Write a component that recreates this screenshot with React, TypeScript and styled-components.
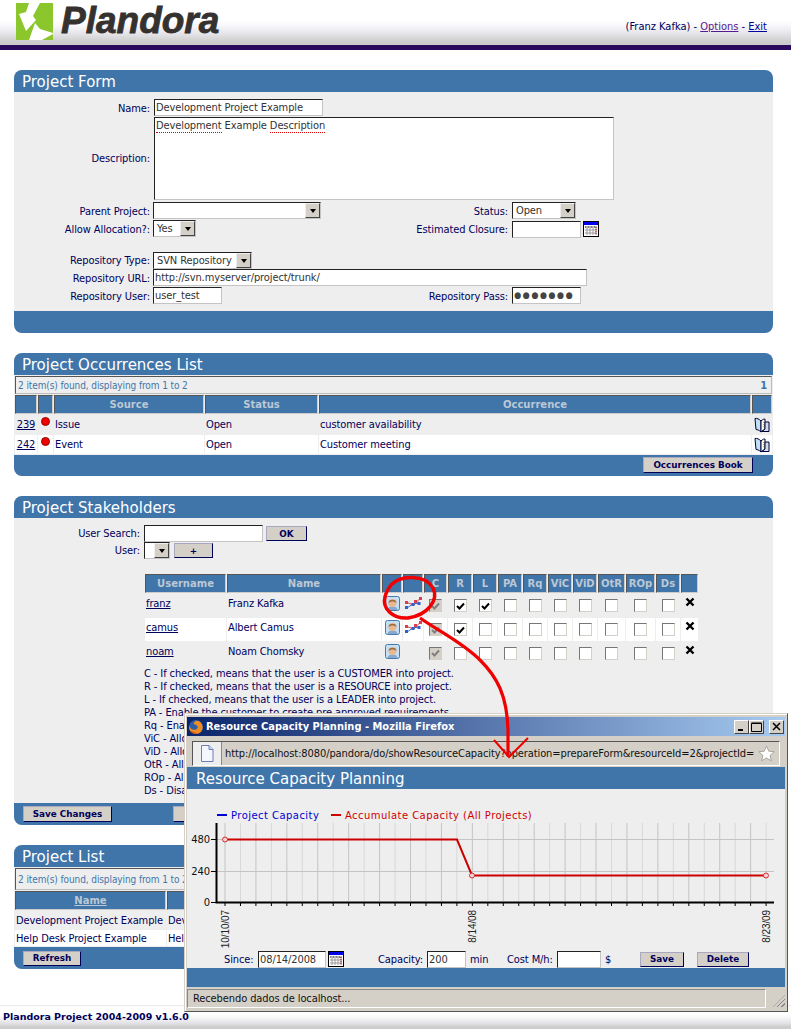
import React from 'react'
import styled, { createGlobalStyle } from 'styled-components'

const colors = {
    blue: '#4075aa',
    grey: '#eeeeee',
    navy: '#00005a',
    win: '#d4d0c8',
    red: '#e00000',
}

const GlobalStyle = createGlobalStyle`
    html, body {
        margin: 0;
        padding: 0;
        background: #fff;
    }
    body {
        font-family: "DejaVu Sans Condensed", "Liberation Sans", Arial, sans-serif;
        font-size: 11px;
        letter-spacing: -0.1px;
        color: ${colors.navy};
    }
`

/* ---------- small drawings ---------- */

const PlandoraMark = () => (
    <svg width="37" height="37" viewBox="0 0 37 37">
        <rect width="37" height="37" fill="#8bc62c" />
        <path d="M13 0H24L17 13L20 17L10 28L3 11L10 9Z" fill="#fff" />
        <path d="M13 37L19 20L24 26L37 30V31L26 37Z" fill="#fff" />
    </svg>
)

const CalendarIcon = () => (
    <svg width="16" height="16" viewBox="0 0 16 16">
        <rect x="0.5" y="0.5" width="15" height="15" fill="#fff" stroke="#000" />
        <rect x="1" y="1" width="14" height="3" fill="#0000f0" />
        <path d="M2 6H14M2 9H14M2 12H14M4 5V14M7 5V14M10 5V14M13 5V14" stroke="#999" />
        <path d="M2 6h10" stroke="#333" strokeDasharray="1 2" />
        <path d="M13 6v8" stroke="#d00" strokeDasharray="1 1" />
    </svg>
)

const BookIcon = () => (
    <svg width="16" height="16" viewBox="0 0 16 16">
        <path d="M1 1.5C3 1 5 2 7 4V15C5 13 3 12.5 2 12.5Z" fill="#bfe0f5" stroke="#00003a" />
        <path d="M7 4C9 2 10 2 11 2V12L7 15Z" fill="#fffbe0" stroke="#00003a" />
        <path d="M11 5H15V14.5H8L11 12Z" fill="#d0dce8" stroke="#00003a" />
        <path d="M9.5 5v5" stroke="#e0c020" strokeDasharray="1 1" />
    </svg>
)

const UserIcon = () => (
    <svg width="15" height="15" viewBox="0 0 15 15">
        <rect x="0.5" y="0.5" width="14" height="14" rx="2" fill="#c4e0f6" stroke="#4a78a8" />
        <path d="M2.5 14C2.5 11.5 5 10.5 7.5 10.5S12.5 11.5 12.5 14Z" fill="#86aace" />
        <circle cx="7.5" cy="7" r="4" fill="#eab890" />
        <path d="M3.5 7C3 2.5 12 2.5 11.5 7C9.5 5 6 5 3.5 7Z" fill="#9a6a3c" />
    </svg>
)

const CapacityIcon = () => (
    <svg width="17" height="13" viewBox="0 0 17 13" fill="none">
        <path d="M2 5.5L9 8L15 1.5" stroke="#d0404a" />
        <path d="M2 11L8 7L14 6" stroke="#3a68c8" />
        <g fill="#d84050">
            <rect x="0" y="4" width="3" height="3" />
            <rect x="9" y="3" width="3" height="3" />
            <rect x="14" y="0" width="3" height="3" />
        </g>
        <g fill="#3060d0">
            <rect x="0" y="9" width="3" height="3" />
            <rect x="6.5" y="6" width="3" height="3" />
            <rect x="12.5" y="5" width="3" height="3" />
        </g>
    </svg>
)

const RemoveIcon = () => (
    <svg width="10" height="10" viewBox="0 0 10 10">
        <path d="M1.5 1.5L8.5 8.5M8.5 1.5L1.5 8.5" stroke="#000" strokeWidth="2.4" />
    </svg>
)

const FirefoxIcon = () => (
    <svg width="16" height="16" viewBox="0 0 17 17">
        <circle cx="8.5" cy="8.5" r="7.5" fill="#2d5fa8" />
        <path d="M8 2C12 1 16 5 15.5 9.5C15 14 11 16.5 7 15.8C3 15 .5 11.5 1.2 7C2 9.5 3.5 11.5 6.5 11.5C9.5 11.5 11 9.5 10 7.5C9 6 7 6 6 5C6 4 7 3 8 2Z" fill="#ef8b1f" />
        <path d="M2 12C4 15 8 16.4 11 15.3C8 15 5 14 2 12Z" fill="#c8401a" />
    </svg>
)

const PageIcon = () => (
    <svg width="14" height="17" viewBox="0 0 14 17">
        <path d="M1.5 .5H9L13 4.5V16.5H1.5Z" fill="#f4f7ff" stroke="#6d7db5" />
        <path d="M9 .5V4.5H13" fill="#cfd8f0" stroke="#6d7db5" />
    </svg>
)

const StarIcon = () => (
    <svg width="17" height="17" viewBox="0 0 17 17">
        <path d="M8.5 1L10.8 6.2L16.2 6.7L12.1 10.4L13.3 15.8L8.5 13L3.7 15.8L4.9 10.4L.8 6.7L6.2 6.2Z" fill="#fff" stroke="#a8a49c" />
    </svg>
)

const CapacityChart = () => {
    const ticks = Array.from({ length: 36 }, (_, i) => 39 + i * 15.46)
    return (
        <svg width="592" height="159" viewBox="5 4 592 159" fontFamily="DejaVu Sans, sans-serif">
            <g fontSize="10" letterSpacing="0.45">
                <rect x="31" y="29" width="10" height="2" fill="#0000d0" />
                <text x="45" y="34" fill="#0000d0">Project Capacity</text>
                <rect x="145" y="29" width="10" height="2" fill="#d00000" />
                <text x="159" y="34" fill="#d00000">Accumulate Capacity (All Projects)</text>
            </g>
            {ticks.map((x, i) => (
                <g key={`tick-${i}`}>
                    <line x1={x} x2={x} y1="38" y2="116" stroke={i % 2 ? '#d8d8d8' : '#c4c4c4'} />
                    <line x1={x} x2={x} y1="117" y2="121" stroke="#000" />
                </g>
            ))}
            <path d="M30 54.5H588M30 86.5H588" stroke="#c4c4c4" />
            <path d="M30.5 38V117.5H588" fill="none" stroke="#000" strokeWidth="2" />
            <path d="M25 54.5H30M25 86.5H30M25 117.5H30" stroke="#000" />
            <g fontSize="10" fill="#111" textAnchor="end">
                <text x="24" y="58">480</text>
                <text x="24" y="90">240</text>
                <text x="24" y="121">0</text>
            </g>
            <path d="M39 54.5H271L286 90.5H580" fill="none" stroke="#cc0000" strokeWidth="2" />
            <g fill="#fbd0d0" stroke="#cc3333">
                <circle cx="39" cy="54.5" r="2.5" />
                <circle cx="286" cy="90.5" r="2.5" />
                <circle cx="580" cy="90.5" r="2.5" />
            </g>
            <g fontSize="10" fontFamily="Liberation Sans, sans-serif" fill="#222" textAnchor="end">
                <text transform="translate(43 125) rotate(-90)">10/10/07</text>
                <text transform="translate(290 125) rotate(-90)">8/14/08</text>
                <text transform="translate(584 125) rotate(-90)">8/23/09</text>
            </g>
        </svg>
    )
}

/* ---------- page chrome ---------- */

const Page = styled.div`
    position: relative;
    width: 791px;
    height: 1029px;
    overflow: hidden;
`

const Header = styled.header`
    height: 50px;
    padding: 3px 24px 0 16px;
    box-sizing: border-box;
    display: flex;
    justify-content: space-between;
    background: linear-gradient(#fff 0, #fff 20px, #f8f6fa 26px, #e4e4e8 34px, #cccccc 42px, #cccccc 45px);
    border-bottom: 5px solid #2b0a5e;
`

const Logo = styled.div`
    display: flex;
    gap: 8px;
`

const LogoText = styled.span`
    font-family: "Liberation Sans", Arial, sans-serif;
    font-size: 37px;
    line-height: 35px;
    font-weight: 700;
    font-style: italic;
    letter-spacing: 0;
    color: #35312f;
    -webkit-text-stroke: 0.8px #35312f;
`

const UserBar = styled.div`
    align-self: flex-end;
    padding-bottom: 12px;
    letter-spacing: 0;
    a { color: #00009c; }
    a.visited { color: #551a8b; }
`

const Main = styled.main`
    padding: 20px 18px 0 14px;
    display: flex;
    flex-direction: column;
`

const Panel = styled.section<{ $gap: number }>`
    margin-bottom: ${p => p.$gap}px;
    background: ${colors.grey};
    border-radius: 8px;
    overflow: hidden;
`

const PanelTitle = styled.h2`
    margin: 0;
    height: 22px;
    padding-left: 8px;
    background: ${colors.blue};
    color: #fff;
    letter-spacing: 0;
    font: 400 15px/25px "DejaVu Sans", Verdana, sans-serif;
`

const PanelFooter = styled.div<{ $height?: number }>`
    height: ${p => p.$height || 22}px;
    box-sizing: border-box;
    background: ${colors.blue};
    display: flex;
    align-items: center;
    padding: 0 20px 0 9px;
    gap: 61px;
`

const FooterEnd = styled(PanelFooter)`
    justify-content: flex-end;
    padding-bottom: 2px;
`

/* ---------- form controls ---------- */

const Label = styled.label`
    text-align: right;
    white-space: nowrap;
    align-self: center;
`

const TextBox = styled.div<{ $width: number; $height?: number }>`
    width: ${p => p.$width}px;
    height: ${p => p.$height || 17}px;
    box-sizing: border-box;
    flex: none;
    padding: 1px;
    background: #fff;
    border: 1px solid #c4c4c4;
    border-top-color: #222;
    border-left-color: #222;
    color: #333;
    line-height: 13px;
    overflow: hidden;
    white-space: nowrap;
`

const Squiggle = styled.span`
    border-bottom: 1px dotted #e00000;
`

const Dots = styled.span`
    letter-spacing: 1.5px;
    font-size: 9px;
    vertical-align: 1px;
    color: #444;
`

const SelectBox = styled.div<{ $width: number }>`
    width: ${p => p.$width}px;
    height: 17px;
    box-sizing: border-box;
    flex: none;
    display: flex;
    justify-content: space-between;
    align-items: stretch;
    padding-left: 3px;
    background: #fff;
    border: 1px solid #c4c4c4;
    border-top-color: #222;
    border-left-color: #222;
    color: #333;
    line-height: 15px;
`

const SelectArrow = styled.span`
    width: 15px;
    box-sizing: border-box;
    display: flex;
    align-items: center;
    justify-content: center;
    background: ${colors.win};
    border: 1px solid;
    border-color: #eee #444 #444 #eee;
    &::after {
        content: '';
        border: 3px solid transparent;
        border-top: 4px solid #000;
        border-bottom: 0;
    }
`

const Select = ({ width, value }: { width: number; value?: string }) => (
    <SelectBox $width={width}>
        <span>{value}</span>
        <SelectArrow />
    </SelectBox>
)

const Button = styled.button<{ $width: number; $height?: number }>`
    width: ${p => p.$width}px;
    height: ${p => p.$height || 16}px;
    flex: none;
    padding: 0;
    background: ${colors.win};
    border: 1px solid;
    border-color: #a8a8c0 #00005a #00005a #a8a8c0;
    color: #00005a;
    font: 700 8.8px/12px "DejaVu Sans", Verdana, sans-serif;
    white-space: nowrap;
    overflow: hidden;
`

const FieldRow = styled.div<{ $gap?: number; $left?: number }>`
    display: flex;
    align-items: center;
    gap: ${p => p.$gap || 2}px;
    margin-left: ${p => p.$left || 0}px;
`

/* ---------- project form ---------- */

const FormGrid = styled.div`
    display: grid;
    grid-template-columns: 136px 248px 102px 1fr;
    grid-template-rows: 18px 83px 2px 18px 18px 14px 17px 18px 18px;
    column-gap: 4px;
    padding: 7px 0 6px;
`

const Wide = styled.div`
    grid-column: 2 / 5;
`

const Spacer = styled.div`
    grid-column: 1 / 5;
`

const Shift = styled.div`
    margin-left: -1px;
`

/* ---------- tables ---------- */

const Pager = styled.div<{ $height?: number }>`
    margin: 1px 1px 0 1px;
    height: ${p => p.$height || 18}px;
    box-sizing: border-box;
    display: flex;
    justify-content: space-between;
    align-items: center;
    padding: 0 4px 0 2px;
    border: 1px solid #bbb;
    border-top-color: #555;
    border-left-color: #555;
    color: #3f76ac;
    font-size: 10px;
    background: ${colors.grey};
    b { font-family: "DejaVu Sans", sans-serif; }
`

const Table = styled.table<{ $x?: number }>`
    table-layout: fixed;
    border-collapse: separate;
    border-spacing: 1px;
    margin-left: ${p => p.$x || 0}px;
`

const Th = styled.th<{ $width?: number }>`
    width: ${p => (p.$width ? `${p.$width}px` : 'auto')};
    height: 17px;
    padding: 0;
    background: ${colors.blue};
    border: 1px solid #ccc;
    border-top-color: #555;
    border-left-color: #555;
    color: #bcc8d4;
    letter-spacing: 0;
    font: 700 10px/12px "DejaVu Sans", Verdana, sans-serif;
    a { color: inherit; }
`

const Td = styled.td<{ $height: number; $odd?: boolean; $center?: boolean; $lift?: number }>`
    height: ${p => p.$height - (p.$lift || 0)}px;
    padding: 0 1px ${p => p.$lift || 0}px;
    background: ${p => (p.$odd ? colors.grey : '#fff')};
    text-align: ${p => (p.$center ? 'center' : 'left')};
    white-space: nowrap;
    overflow: hidden;
    a { color: #00005a; }
    svg { display: inline-block; vertical-align: middle; }
`

const Dot = styled.span`
    display: inline-block;
    width: 9px;
    height: 9px;
    border-radius: 50%;
    background: #f00000;
    border: 1px solid #900;
    box-sizing: border-box;
    margin-bottom: 3px;
`

const occurrences = [
    { id: '239', source: 'Issue', status: 'Open', text: 'customer availability', odd: true },
    { id: '242', source: 'Event', status: 'Open', text: 'Customer meeting', odd: false },
]

const OccurrenceTable = () => (
    <Table>
        <thead>
            <tr>
                <Th $width={20} />
                <Th $width={13} />
                <Th $width={148}>Source</Th>
                <Th $width={111}>Status</Th>
                <Th $width={430}>Occurrence</Th>
                <Th $width={18} />
            </tr>
        </thead>
        <tbody>
            {occurrences.map(o => (
                <tr key={o.id}>
                    <Td $height={19} $odd={o.odd} $center><a href="#o">{o.id}</a></Td>
                    <Td $height={19} $odd={o.odd} $center><Dot /></Td>
                    <Td $height={19} $odd={o.odd}>{o.source}</Td>
                    <Td $height={19} $odd={o.odd}>{o.status}</Td>
                    <Td $height={19} $odd={o.odd}>{o.text}</Td>
                    <Td $height={19} $odd={o.odd} $center><BookIcon /></Td>
                </tr>
            ))}
        </tbody>
    </Table>
)

/* ---------- stakeholders ---------- */

const SearchForm = styled.div`
    display: grid;
    grid-template-columns: 126px 1fr;
    grid-auto-rows: 17px;
    column-gap: 4px;
    padding: 7px 0 14px;
`

const Check = styled.span<{ $disabled?: boolean }>`
    display: inline-flex;
    align-items: center;
    justify-content: center;
    vertical-align: middle;
    width: 13px;
    height: 13px;
    box-sizing: border-box;
    background: ${p => (p.$disabled ? colors.win : '#fff')};
    border: 1px solid;
    border-color: #777 #d4d0c8 #d4d0c8 #777;
`

const CheckMark = ({ color }: { color: string }) => (
    <svg width="9" height="8" viewBox="0 0 9 8">
        <path d="M1 4L3.5 6.5L8 1.5" fill="none" stroke={color} strokeWidth="2" />
    </svg>
)

const roleColumns = [
    { name: 'C', width: 21 }, { name: 'R', width: 22 }, { name: 'L', width: 22 }, { name: 'PA', width: 22 },
    { name: 'Rq', width: 22 }, { name: 'ViC', width: 22 }, { name: 'ViD', width: 22 }, { name: 'OtR', width: 25 },
    { name: 'ROp', width: 27 }, { name: 'Ds', width: 22 },
]

const stakeholders = [
    { user: 'franz', name: 'Franz Kafka', odd: true, height: 23, chart: true, roles: ['C', 'R', 'L'] },
    { user: 'camus', name: 'Albert Camus', odd: false, height: 23, chart: true, roles: ['C', 'R'] },
    { user: 'noam', name: 'Noam Chomsky', odd: true, height: 22, chart: false, roles: ['C'] },
]

const StakeholderTable = () => (
    <Table $x={130}>
        <thead>
            <tr>
                <Th $width={79}>Username</Th>
                <Th $width={152}>Name</Th>
                <Th $width={18} />
                <Th $width={18} />
                {roleColumns.map(c => <Th key={c.name} $width={c.width}>{c.name}</Th>)}
                <Th $width={15} />
            </tr>
        </thead>
        <tbody>
            {stakeholders.map(s => (
                <tr key={s.user}>
                    <Td $height={s.height} $odd={s.odd} $lift={4}><a href="#u">{s.user}</a></Td>
                    <Td $height={s.height} $odd={s.odd} $lift={4}>{s.name}</Td>
                    <Td $height={s.height} $odd={s.odd} $center $lift={4}><UserIcon /></Td>
                    <Td $height={s.height} $odd={s.odd} $center $lift={4}>{s.chart && <CapacityIcon />}</Td>
                    {roleColumns.map(c => {
                        const disabled = c.name === 'C'
                        const on = s.roles.includes(c.name)
                        return (
                            <Td key={c.name} $height={s.height} $odd={s.odd} $center>
                                <Check $disabled={disabled}>
                                    {on && <CheckMark color={disabled ? '#808080' : '#000'} />}
                                </Check>
                            </Td>
                        )
                    })}
                    <Td $height={s.height} $odd={s.odd} $center $lift={8}><RemoveIcon /></Td>
                </tr>
            ))}
        </tbody>
    </Table>
)

const Legend = styled.ul`
    list-style: none;
    margin: 2px 0 6px 130px;
    padding: 0;
    line-height: 13px;
    height: 130px;
    white-space: nowrap;
`

const legendLines = [
    'C - If checked, means that the user is a CUSTOMER into project.',
    'R - If checked, means that the user is a RESOURCE into project.',
    'L - If checked, means that the user is a LEADER into project.',
    'PA - Enable the customer to create pre approved requirements.',
    'Rq - Enable the customer to create requirements.',
    'ViC - Allow the customer to view the other customers.',
    'ViD - Allow the customer to view the disabled users.',
    'OtR - Allow the customer to view other requesters.',
    'ROp - Allow the customer to view the resources.',
    'Ds - Disable the user of the project.',
]

/* ---------- popup window ---------- */

const PopupWindow = styled.div`
    position: absolute;
    left: 184px;
    top: 713px;
    width: 604px;
    height: 299px;
    box-sizing: border-box;
    display: flex;
    flex-direction: column;
    padding: 3px 2px 3px 2px;
    background: ${colors.win};
    border: 1px solid;
    border-color: #d4d0c8 #555 #555 #d4d0c8;
    box-shadow: inset 1px 1px 0 #fff;
`

const TitleBar = styled.div`
    flex: none;
    height: 19px;
    display: flex;
    align-items: center;
    gap: 2px;
    padding: 0 3px 0 1px;
    background: linear-gradient(90deg, #0a246a, #a6caf0);
    color: #fff;
    letter-spacing: 0;
    font: 700 11px/18px "DejaVu Sans Condensed", "DejaVu Sans", sans-serif;
`

const TitleText = styled.span`
    flex: 1;
`

const WinButton = styled.span<{ $gap?: number }>`
    width: 15px;
    height: 14px;
    margin: 0 -2px 0 ${p => p.$gap || 0}px;
    box-sizing: border-box;
    display: flex;
    align-items: center;
    justify-content: center;
    background: ${colors.win};
    border: 1px solid;
    border-color: #fff #444 #444 #fff;
`

const AddressBar = styled.div`
    flex: none;
    height: 25px;
    margin: 5px 5px 1px 5px;
    box-sizing: border-box;
    display: flex;
    align-items: center;
    border: 1px solid;
    border-color: #555 #fff #fff #555;
    padding-right: 4px;
    color: #111;
    white-space: nowrap;
    overflow: hidden;
`

const SiteBox = styled.span`
    flex: none;
    width: 29px;
    height: 100%;
    box-sizing: border-box;
    display: flex;
    align-items: center;
    justify-content: center;
    background: #eeeeee;
    border-right: 1px solid #888;
    margin-right: 3px;
`

const AddressText = styled.span`
    flex: 1;
    overflow: hidden;
    font-size: 11px;
`

const PopupBody = styled.div`
    flex: 1;
    display: flex;
    flex-direction: column;
    background: ${colors.grey};
`

const PopupTitle = styled(PanelTitle)`
    padding-left: 9px;
    flex: none;
`

const ChartArea = styled.div`
    flex: none;
    height: 159px;
    overflow: hidden;
    svg { display: block; margin-left: 4px; }
`

const PopupForm = styled.div`
    flex: none;
    height: 20px;
    box-sizing: border-box;
    display: flex;
    align-items: center;
    padding: 2px 0 0 37px;
`

const FieldLabel = styled.span<{ $width: number }>`
    flex: none;
    width: ${p => p.$width}px;
    white-space: nowrap;
`

const PopupBand = styled.div`
    flex: none;
    height: 19px;
    background: ${colors.blue};
`

const StatusRow = styled.div`
    flex: none;
    height: 19px;
    margin-top: 2px;
    display: flex;
    align-items: center;
`

const StatusText = styled.div`
    width: 579px;
    height: 19px;
    box-sizing: border-box;
    flex: none;
    padding-left: 5px;
    border: 1px solid;
    border-color: #888 #fff #fff #888;
    color: #111;
    line-height: 17px;
`

const Grip = styled.span`
    width: 12px;
    height: 12px;
    margin: 5px 0 0 7px;
    background: repeating-linear-gradient(135deg, transparent 0 2px, #888 2px 3px);
    clip-path: polygon(100% 0, 100% 100%, 0 100%);
`

const Popup = () => (
    <PopupWindow>
        <TitleBar>
            <FirefoxIcon />
            <TitleText>Resource Capacity Planning - Mozilla Firefox</TitleText>
            <WinButton>
                <svg width="9" height="9" viewBox="0 0 9 9"><path d="M1 8H6" stroke="#000" strokeWidth="2" /></svg>
            </WinButton>
            <WinButton>
                <svg width="11" height="10" viewBox="0 0 11 10"><path d="M.5 1.5H10.5V9.5H.5ZM.5 1H10.5" fill="none" stroke="#000" /></svg>
            </WinButton>
            <WinButton $gap={5}>
                <svg width="9" height="9" viewBox="0 0 9 9"><path d="M1 1L8 8M8 1L1 8" stroke="#000" strokeWidth="1.5" /></svg>
            </WinButton>
        </TitleBar>
        <AddressBar>
            <SiteBox><PageIcon /></SiteBox>
            <AddressText>http://localhost:8080/pandora/do/showResourceCapacity?operation=prepareForm&amp;resourceId=2&amp;projectId=</AddressText>
            <StarIcon />
        </AddressBar>
        <PopupBody>
            <PopupTitle>Resource Capacity Planning</PopupTitle>
            <ChartArea><CapacityChart /></ChartArea>
            <PopupForm>
                <FieldRow $gap={4}>
                    <FieldLabel $width={30}>Since:</FieldLabel>
                    <TextBox $width={68}>08/14/2008</TextBox>
                </FieldRow>
                <FieldRow $left={2}><CalendarIcon /></FieldRow>
                <FieldRow $gap={4} $left={34}>
                    <FieldLabel $width={45}>Capacity:</FieldLabel>
                    <TextBox $width={39}>200</TextBox>
                    <FieldLabel $width={37}>min</FieldLabel>
                </FieldRow>
                <FieldRow $gap={4}>
                    <FieldLabel $width={46}>Cost M/h:</FieldLabel>
                    <TextBox $width={44} />
                    <FieldLabel $width={35}>$</FieldLabel>
                </FieldRow>
                <FieldRow $gap={13}>
                    <Button $width={44} $height={15}>Save</Button>
                    <Button $width={52} $height={15}>Delete</Button>
                </FieldRow>
            </PopupForm>
            <PopupBand />
        </PopupBody>
        <StatusRow>
            <StatusText>Recebendo dados de localhost...</StatusText>
            <Grip />
        </StatusRow>
    </PopupWindow>
)

/* red hand-drawn note over the screenshot */
const NoteLayer = styled.svg`
    position: absolute;
    left: 0;
    top: 0;
    pointer-events: none;
`

const Note = () => (
    <NoteLayer width="791" height="1029" viewBox="0 0 791 1029" fill="none" stroke="#f00000">
        <path d="M391 585C400 575 425 574 433 588C439 600 428 615 408 618C392 619 382 608 385 597C386 592 388 589 391 585" strokeWidth="3.5" />
        <path d="M420 618C440 632 462 642 480 660C497 677 507 695 508 730V756" strokeWidth="3.2" />
        <path d="M494 740L509 757L528 738" strokeWidth="2" />
    </NoteLayer>
)

/* ---------- bottom strip ---------- */

const Footer = styled.footer`
    position: absolute;
    left: 0;
    right: 0;
    bottom: 0;
    height: 24px;
    box-sizing: border-box;
    padding: 5px 0 0 3px;
    background: linear-gradient(#e8e8e8 0, #fff 2px, #fff 10px, #e4e4e8 18px, #cccccc 22px);
    letter-spacing: 0;
    font: 700 9.5px/14px "DejaVu Sans", Verdana, sans-serif;
    color: #00005a;
`

const App = () => (
    <Page>
        <GlobalStyle />
        <Header>
            <Logo>
                <PlandoraMark />
                <LogoText>Plandora</LogoText>
            </Logo>
            <UserBar>
                (Franz Kafka) - <a className="visited" href="#o">Options</a> - <a href="#e">Exit</a>
            </UserBar>
        </Header>
        <Main>
            <Panel $gap={20}>
                <PanelTitle>Project Form</PanelTitle>
                <FormGrid>
                    <Label>Name:</Label>
                    <Wide><TextBox $width={169}>Development Project Example</TextBox></Wide>
                    <Label>Description:</Label>
                    <Wide>
                        <TextBox $width={460} $height={83}><Squiggle>Development</Squiggle> Example <Squiggle>Description</Squiggle></TextBox>
                    </Wide>
                    <Spacer />
                    <Label>Parent Project:</Label>
                    <Shift><Select width={168} /></Shift>
                    <Label>Status:</Label>
                    <Select width={64} value="Open" />
                    <Label>Allow Allocation?:</Label>
                    <Shift><Select width={43} value="Yes" /></Shift>
                    <Label>Estimated Closure:</Label>
                    <FieldRow><TextBox $width={69} /><CalendarIcon /></FieldRow>
                    <Spacer />
                    <Label>Repository Type:</Label>
                    <Wide><Shift><Select width={99} value="SVN Repository" /></Shift></Wide>
                    <Label>Repository URL:</Label>
                    <Wide><Shift><TextBox $width={434}>http://svn.myserver/project/trunk/</TextBox></Shift></Wide>
                    <Label>Repository User:</Label>
                    <Shift><TextBox $width={69}>user_test</TextBox></Shift>
                    <Label>Repository Pass:</Label>
                    <TextBox $width={69}><Dots>●●●●●●●</Dots></TextBox>
                </FormGrid>
                <PanelFooter />
            </Panel>
            <Panel $gap={20}>
                <PanelTitle>Project Occurrences List</PanelTitle>
                <Pager><span>2 item(s) found, displaying from 1 to 2</span><b>1</b></Pager>
                <OccurrenceTable />
                <FooterEnd $height={21}>
                    <Button $width={110}>Occurrences Book</Button>
                </FooterEnd>
            </Panel>
            <Panel $gap={20}>
                <PanelTitle>Project Stakeholders</PanelTitle>
                <SearchForm>
                    <Label>User Search:</Label>
                    <FieldRow $gap={3}><TextBox $width={119} /><Button $width={41} $height={15}>OK</Button></FieldRow>
                    <Label>User:</Label>
                    <FieldRow $gap={4}><Select width={26} /><Button $width={39} $height={15}>+</Button></FieldRow>
                </SearchForm>
                <StakeholderTable />
                <Legend>
                    {legendLines.map(line => <li key={line}>{line}</li>)}
                </Legend>
                <PanelFooter>
                    <Button $width={89}>Save Changes</Button>
                    <Button $width={60}>Back</Button>
                </PanelFooter>
            </Panel>
            <Panel $gap={0}>
                <PanelTitle>Project List</PanelTitle>
                <Pager $height={22}><span>2 item(s) found, displaying from 1 to 2</span><b>1</b></Pager>
                <Table>
                    <thead>
                        <tr>
                            <Th $width={149}><a href="#n">Name</a></Th>
                            <Th $width={600}>Description</Th>
                        </tr>
                    </thead>
                    <tbody>
                        <tr>
                            <Td $height={18} $odd>Development Project Example</Td>
                            <Td $height={18} $odd>Development Example Description</Td>
                        </tr>
                        <tr>
                            <Td $height={16}>Help Desk Project Example</Td>
                            <Td $height={16}>Help Desk Example Description</Td>
                        </tr>
                    </tbody>
                </Table>
                <PanelFooter>
                    <Button $width={58} $height={15}>Refresh</Button>
                </PanelFooter>
            </Panel>
        </Main>
        <Footer>Plandora Project 2004-2009 v1.6.0</Footer>
        <Popup />
        <Note />
    </Page>
)

export default App
